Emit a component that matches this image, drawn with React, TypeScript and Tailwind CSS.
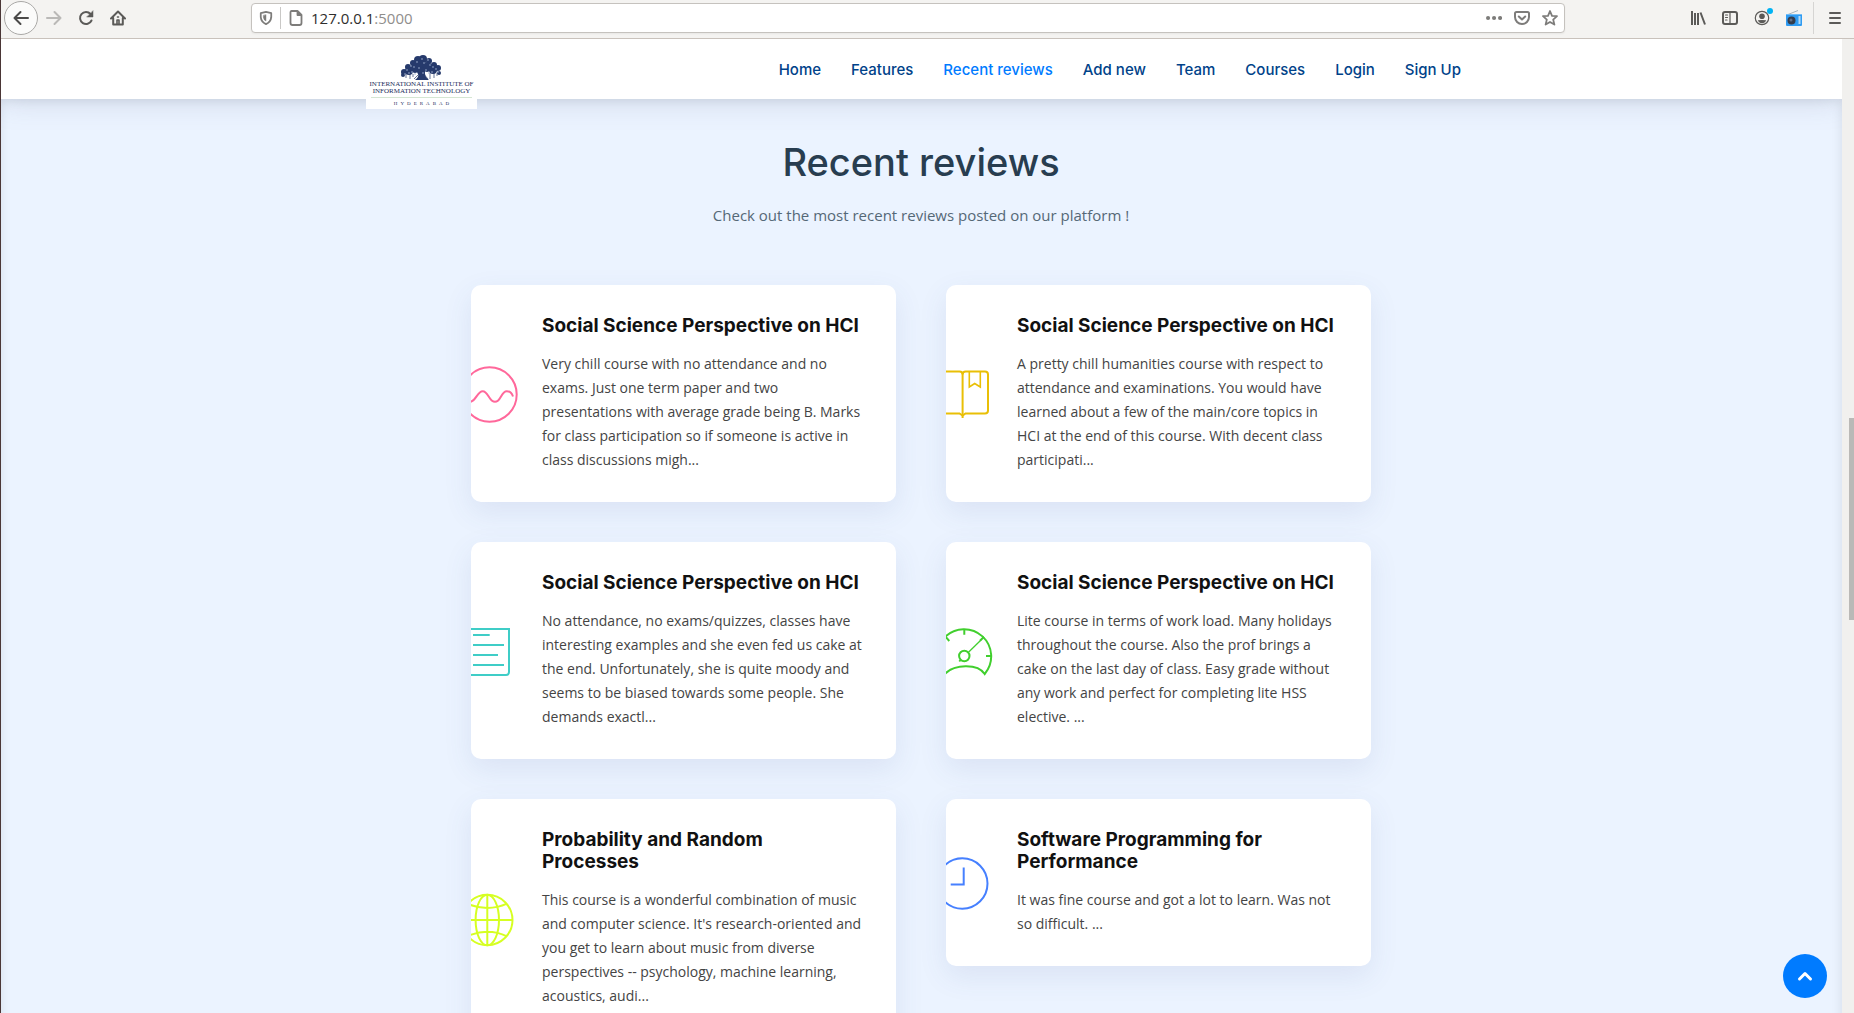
import React from "react";

type Review = { title: string; text: string; color: string; icon: React.ReactNode };

const reviews: Review[] = [
  {
    title: "Social Science Perspective on HCI",
    text: "Very chill course with no attendance and no exams. Just one term paper and two presentations with average grade being B. Marks for class participation so if someone is active in class discussions migh...",
    color: "text-[#ff689b]",
    icon: (
      <>
        <circle cx="18.5" cy="32.5" r="27.2" />
        <path d="M-1 39.8C5 39.8 6 29.2 11.7 29.2S18 39.8 24 39.8S30 29.2 35.7 29.2C39 29.2 41 31.5 42 34.5" />
      </>
    ),
  },
  {
    title: "Social Science Perspective on HCI",
    text: "A pretty chill humanities course with respect to attendance and examinations. You would have learned about a few of the main/core topics in HCI at the end of this course. With decent class participati...",
    color: "text-[#e9bf06]",
    icon: (
      <>
        <path d="M-2 9.5H13.5Q16.6 9.5 16.6 12.5Q16.6 9.5 19.7 9.5H39Q42 9.5 42 12.5V48.5Q42 51.5 39 51.5H19.5L16.6 53.5L13.5 51.5H-2" />
        <path d="M16.6 11V56" />
        <path d="M23.3 9.5V25L28.7 21.5L34.3 25V9.5" strokeWidth="1.6" />
      </>
    ),
  },
  {
    title: "Social Science Perspective on HCI",
    text: "No attendance, no exams/quizzes, classes have interesting examples and she even fed us cake at the end. Unfortunately, she is quite moody and seems to be biased towards some people. She demands exactl...",
    color: "text-[#3fcdc7]",
    icon: <path d="M-2 10H38V53Q38 56 35 56H-2M2 16H18.7M2 26H33M2 36H27M2 46H33" />,
  },
  {
    title: "Social Science Perspective on HCI",
    text: "Lite course in terms of work load. Many holidays throughout the course. Also the prof brings a cake on the last day of class. Easy grade without any work and perfect for completing lite HSS elective. ...",
    color: "text-[#41cf2e]",
    icon: (
      <>
        <path d="M-2 55.8A27.2 27.2 0 1 1 38.7 55C32 44.5 8 44.5 -2 55.8" />
        <circle cx="18.3" cy="37" r="5.2" />
        <path d="M18.3 10V15.7M40 37H45.5M34 21.7L38 17.7M-1 17.2L3.3 22M14.5 41L13.3 42.5" />
        <path d="M22.7 33L35 21" strokeWidth="1.3" />
      </>
    ),
  },
  {
    title: "Probability and Random\nProcesses",
    text: "This course is a wonderful combination of music and computer science. It's research-oriented and you get to learn about music from diverse perspectives -- psychology, machine learning, acoustics, audi...",
    color: "text-[#d6ff22]",
    icon: (
      <>
        <circle cx="16.3" cy="33" r="25.2" />
        <ellipse cx="16.3" cy="33" rx="11.7" ry="25.2" />
        <path d="M16.3 8V58M-10 33H42M-3.5 16.7Q6 21 16.3 21T36 16.7M-3.5 49.3Q6 44.7 16.3 44.7T36 49.3" />
      </>
    ),
  },
  {
    title: "Software Programming for\nPerformance",
    text: "It was fine course and got a lot to learn. Was not so difficult. ...",
    color: "text-[#4680ff]",
    icon: (
      <>
        <circle cx="16.3" cy="32.5" r="25.2" />
        <path d="M17.7 16.5V33.5H4.7" />
      </>
    ),
  },
];

const links = ["Home", "Features", "Recent reviews", "Add new", "Team", "Courses", "Login", "Sign Up"];

function Glyph({ children, className = "" }: { children: React.ReactNode; className?: string }) {
  return (
    <svg
      viewBox="0 0 16 16"
      className={"h-4 w-4 shrink-0 " + className}
      fill="none"
      stroke="currentColor"
      strokeWidth="2"
      strokeLinecap="round"
      strokeLinejoin="round"
      aria-hidden="true"
    >
      {children}
    </svg>
  );
}

function BrowserBar() {
  const side = "flex h-8 w-8 items-center justify-center text-[#5b5a58]";
  return (
    <div className="flex h-[39px] shrink-0 items-start border-b border-[#c9c2bc] bg-[#f4f3f1] pl-1">
      <div className="flex w-[247px] shrink-0 items-center pt-px">
        <button aria-label="Back" className="flex h-[34px] w-[34px] items-center justify-center rounded-full border border-[#aaa9a7] bg-[#fbfbfa] text-[#4b4a49]">
          <Glyph><path d="M15 8H1.5M7.5 2L1.5 8L7.5 14" /></Glyph>
        </button>
        <button aria-label="Forward" className="flex h-8 w-8 items-center justify-center text-[#bab9b7]">
          <Glyph><path d="M1 8H14.5M8.5 2L14.5 8L8.5 14" /></Glyph>
        </button>
        <button aria-label="Reload" className={side}>
          <Glyph><path d="M13.5 10.5A6 6 0 1 1 12.5 4" /><path d="M15 1V7H9Z" fill="currentColor" strokeWidth="0.5" /></Glyph>
        </button>
        <button aria-label="Home page" className={side}>
          <Glyph>
            <path d="M1 8.5L8 1.5L15 8.5M3.2 8V14.5H12.8V8" />
            <path d="M7 14V10H9V14M7.5 7H8.5" strokeWidth="1.6" />
          </Glyph>
        </button>
      </div>
      <div className="mt-[3px] flex h-[30px] grow items-center rounded border border-[#c5c2be] bg-white pr-1.5 text-[#7d7c7a] shadow-xs">
        <span className="flex h-[22px] w-[29px] items-center justify-center border-r border-[#c9c8c6]">
          <Glyph className="h-[14px] w-[14px]">
            <path d="M8 1L14 2.5V7Q13.5 12.5 8 15Q2.5 12.5 2 7V2.5Z" />
            <path d="M8 4.5V11.5Q5 10 5 7V5.2Z" fill="currentColor" strokeWidth="0.5" />
          </Glyph>
        </span>
        <span className="flex w-[29px] items-center justify-center">
          <Glyph><path d="M3.5 1H9.5L13.5 5V13Q13.5 15 11.5 15H4.5Q2.5 15 2.5 13V2.5Q2.5 1 3.5 1ZM9.5 1V5H13.5" strokeWidth="1.8" /></Glyph>
        </span>
        <div className="relative ml-px h-7 grow font-['Open_Sans',sans-serif] text-[15px] leading-7">
          <input aria-label="Address" defaultValue="127.0.0.1:5000" className="absolute inset-0 w-full bg-transparent text-transparent outline-none" />
          <span aria-hidden="true" className="pointer-events-none text-[#2f2e2d]">127.0.0.1<span className="text-[#8f8e8c]">:5000</span></span>
        </div>
        <div className="flex items-center gap-3">
          <button aria-label="Page actions"><Glyph><path d="M2 8H2.1M8 8H8.1M14 8H14.1" strokeWidth="4" /></Glyph></button>
          <button aria-label="Save to Pocket"><Glyph><path d="M2.5 2H13.5Q15 2 15 3.5V7A7 7 0 0 1 1 7V3.5Q1 2 2.5 2ZM4.8 6.5L8 9.5L11.2 6.5" /></Glyph></button>
          <button aria-label="Bookmark"><Glyph><path d="M8 1L10 5.8L15 6.2L11.2 9.6L12.4 14.6L8 11.9L3.6 14.6L4.8 9.6L1 6.2L6 5.8Z" strokeWidth="1.8" /></Glyph></button>
        </div>
      </div>
      <div className="ml-[117px] flex shrink-0 items-center pt-0.5">
        <button aria-label="Library" className={side}><Glyph><path d="M2 1V15M5 3V15M8 3V15M10.5 2.5L15 14.5" strokeLinecap="butt" /></Glyph></button>
        <button aria-label="Sidebars" className={side}><Glyph><rect x="1" y="2" width="14" height="12" rx="2" /><path d="M8 2V14M3.5 5H5.5M3.5 7.5H5.5M3.5 10H5" strokeWidth="1.2" /></Glyph></button>
        <button aria-label="Account" className={side + " relative"}>
          <Glyph>
            <circle cx="8" cy="8" r="6.7" strokeWidth="1.2" />
            <circle cx="8" cy="6.2" r="2.8" fill="currentColor" stroke="none" />
            <path d="M3.8 10.3Q8 9.5 12.2 10.3Q11 13.3 8 13.3T3.8 10.3Z" fill="currentColor" stroke="none" />
          </Glyph>
          <span className="absolute right-[5px] top-1.5 h-1.5 w-1.5 rounded-full bg-[#00b3f4]" />
        </button>
        <button aria-label="Radio" className={side}>
          <svg viewBox="0 0 16 16" className="h-4 w-4" aria-hidden="true">
            <path d="M2 4.5L12 .5" stroke="#a9b4bc" />
            <rect y="4" width="16" height="12" rx="1" fill="#2f9bf2" />
            <path d="M0 4.5H16" stroke="#6fbcf7" />
            <circle cx="5.5" cy="10.5" r="4" fill="#333c4c" />
            <circle cx="5" cy="10" r="1.5" fill="#657085" />
            <path d="M13.5 6V14" stroke="#b4daf7" strokeWidth="2" />
          </svg>
        </button>
        <span className="ml-[3px] h-8 w-px bg-[#d6d5d3]" />
        <button aria-label="Menu" className={side + " ml-[5px] mr-[3px]"}><Glyph><path d="M3 3H13M3 8H13M3 13H13" /></Glyph></button>
      </div>
    </div>
  );
}

const leaves = [
  [4, 17, 3], [8, 12, 3], [13, 8, 3], [18, 5, 4], [23, 4, 4], [29, 6, 3], [34, 10, 3], [38, 13, 3],
  [9, 16, 4], [15, 13, 5], [21, 10, 5], [27, 12, 5], [33, 15, 4], [21, 16, 4], [39, 18, 2], [3, 20, 2],
];
const gaps = [
  [7, 15], [11, 11], [12, 17], [17, 7], [19, 13], [24, 8], [26, 15], [30, 10], [32, 17], [36, 14], [22, 4], [15, 19], [28, 5], [38, 17], [5, 19], [29, 18], [14, 12], [33, 12], [23, 18], [9, 18],
];

function Logo() {
  return (
    <a href="#home" aria-label="International Institute of Information Technology Hyderabad" className="mt-2 flex h-[62px] w-[111px] shrink-0 flex-col items-center bg-white pt-2 font-['Liberation_Serif',serif] text-[#1b2d5c]">
      <svg viewBox="0 0 43 26" className="h-[26px] w-[43px]" fill="#263a6c" aria-hidden="true">
        {leaves.map(([x, y, r]) => <circle key={`${x}-${y}`} cx={x} cy={y} r={r} />)}
        <path d="M18 15H25Q24 22 29 25H15Q20 22 18 15Z" />
        <path d="M6 19V23M10 19V24M13 19V22M30 18V24M34 18V23M37 18V21M22 17L28 24M21 17L14 24" stroke="#263a6c" strokeWidth=".7" />
        <g fill="#9fb0cf">{gaps.map(([x, y]) => <circle key={`${x}-${y}`} cx={x} cy={y} r=".8" />)}</g>
      </svg>
      <span className="whitespace-nowrap text-[7px] leading-[7px]">INTERNATIONAL INSTITUTE OF</span>
      <span className="whitespace-nowrap text-[7px] leading-[7px]">INFORMATION TECHNOLOGY</span>
      <span className="mt-0.5 h-px w-[101px] shrink-0 bg-[#d5e6d3]" />
      <span className="mt-[3px] pl-[3px] text-[5px] leading-[5px] tracking-[3px]">HYDERABAD</span>
    </a>
  );
}

export default function App() {
  return (
    <div className="relative flex h-screen flex-col overflow-hidden bg-white">
      <div className="absolute inset-y-0 left-0 z-20 w-px bg-[#4a3636]" />
      <BrowserBar />
      <div className="flex min-h-0 grow">
        <div className="relative flex min-w-0 grow flex-col overflow-hidden">
          <header className="z-10 h-[60px] shrink-0 bg-white shadow-[0_0_30px_rgba(127,137,161,0.3)]">
            <div className="mx-auto flex max-w-[1140px] items-start justify-between px-[15px]">
              <Logo />
              <nav className="pt-[21px]">
                <ul className="flex font-[Inter,sans-serif] text-[15px] font-medium leading-5">
                  {links.map((l) => (
                    <li key={l}>
                      <a href={"#" + l.toLowerCase().replace(" ", "-")} className={"px-[15px] " + (l === "Recent reviews" ? "text-[#007bff]" : "text-[#004289]")}>{l}</a>
                    </li>
                  ))}
                </ul>
              </nav>
            </div>
          </header>
          <section className="-mb-10 min-h-0 grow bg-[#ebf3ff] pt-[41px] shadow-[inset_0_0_12px_rgba(0,0,0,0.1)]">
            <h2 className="text-center font-[Inter,sans-serif] text-[38px] font-medium leading-[44px] text-[#283d50]">Recent reviews</h2>
            <p className="mt-[19px] text-center font-['Open_Sans',sans-serif] text-[15px] leading-6 text-[#556877]">Check out the most recent reviews posted on our platform !</p>
            <div className="mx-auto mt-[58px] grid max-w-[900px] grid-cols-2 items-start gap-x-[50px] gap-y-10">
              {reviews.map((r, i) => (
                <article key={i} className="flex items-center overflow-hidden rounded-[10px] bg-white shadow-[0_10px_29px_0_rgba(68,88,144,0.1)]">
                  <svg viewBox="0 0 48 64" className={"h-16 w-12 shrink-0 " + r.color} fill="none" stroke="currentColor" strokeWidth="2" aria-hidden="true">{r.icon}</svg>
                  <div className="py-[30px] pl-[23px] pr-[29px]">
                    <h3 className="whitespace-pre-line font-[Inter,sans-serif] text-[19px] font-bold leading-[22px] text-[#111111]">{r.title}</h3>
                    <p className="mt-[15px] font-['Open_Sans',sans-serif] text-sm leading-6 text-[#444444]">{r.text}</p>
                  </div>
                </article>
              ))}
            </div>
          </section>
          <button aria-label="Back to top" className="absolute bottom-[15px] right-[15px] flex h-11 w-11 items-center justify-center rounded-full bg-[#007bff] text-white">
            <svg viewBox="0 0 16 16" className="h-4 w-4" fill="none" stroke="currentColor" strokeWidth="3" aria-hidden="true"><path d="M2.5 11L8 5.5L13.5 11" strokeLinejoin="round" strokeLinecap="round" /></svg>
          </button>
        </div>
        <div className="flex w-3 shrink-0 flex-col items-end bg-[#f1f0ee] pt-[379px]">
          <div className="h-[202px] w-[5px] bg-[#bab9b7]" />
        </div>
      </div>
    </div>
  );
}
